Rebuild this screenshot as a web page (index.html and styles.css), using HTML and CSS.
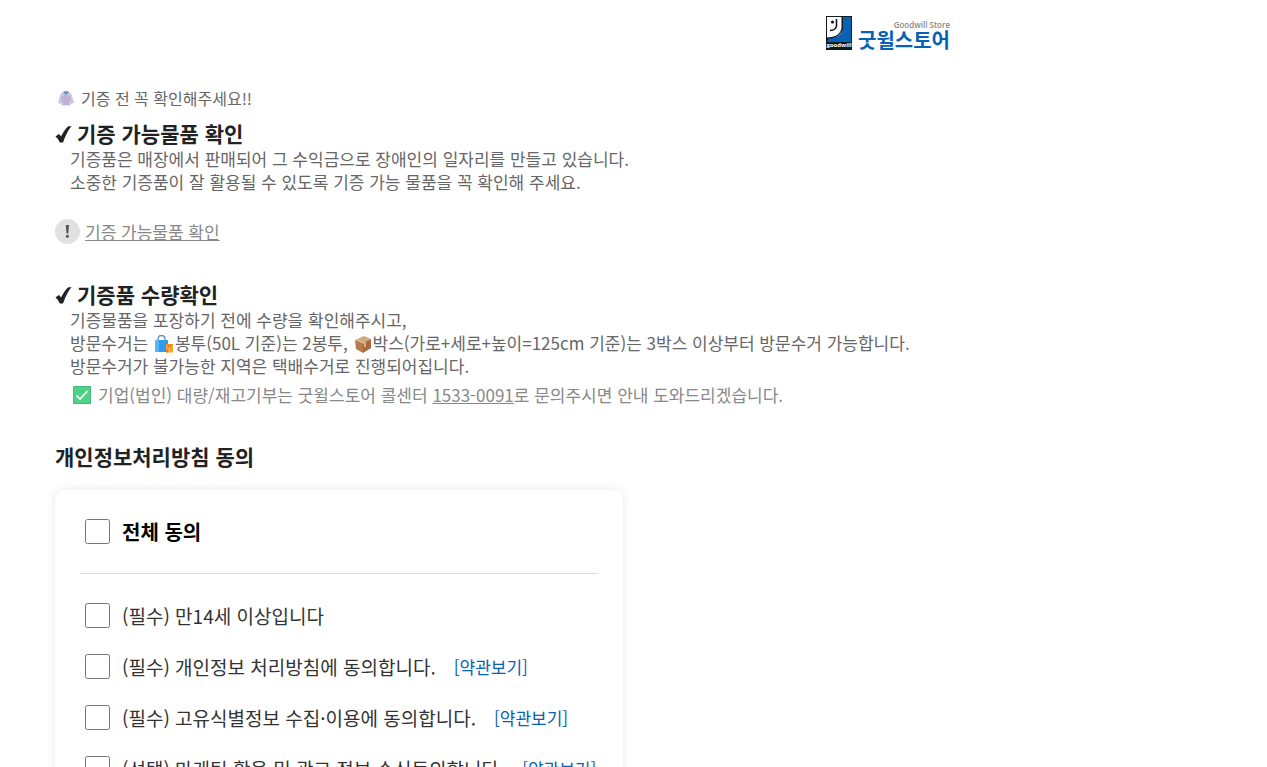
FILE: index.html
```html
<!DOCTYPE html>
<html lang="ko">
<head>
<meta charset="utf-8">
<meta name="viewport" content="width=device-width, initial-scale=1">
<title>굿윌스토어 기증 신청</title>
<link rel="stylesheet" href="styles.css">
</head>
<body>
<div class="page">
  <header class="header">
    <a class="logo" href="#">
      <svg class="logo-mark" viewBox="0 0 26 34" aria-hidden="true">
        <rect width="26" height="34" fill="#101820"/>
        <path d="M12 1h13v25H1z" fill="#0762b3"/>
        <path d="M1 1h15v12Q16 22 1 22z" fill="#fff"/>
        <path d="M1 23q14-1 16-11V1h-1.500v11Q14 21 1 21.500z" fill="#101820"/>
        <circle cx="6.500" cy="6" r="1.600" fill="#111"/>
        <path d="M10.500 3v7q-.5 4-6.500 4.500" fill="none" stroke="#111" stroke-width="1.600"/>
        <text class="logo-tag" x="13" y="31" text-anchor="middle">goodwill</text>
      </svg>
      <span class="logo-text">
        <span class="logo-en">Goodwill Store</span>
        <span class="logo-ko">굿윌스토어</span>
      </span>
    </a>
  </header>

  <main>
    <p class="notice">
      <svg class="coat" viewBox="0 0 16 15" aria-hidden="true">
        <path d="M5 1 2.500 3 0 12l3 1 1-3-.8 4.500h9.600L12 10l1 3 3-1-2.500-9L11 1z" fill="#cfc4e3"/>
        <path d="M5 1l3 3 3-3-1-.8H6z" fill="#5f8fc8"/>
        <path d="M8 4v10M4.500 5 4 11M11.500 5l.5 6M6.200 4v10M9.800 4v10" stroke="#a294c4" stroke-width=".7" fill="none"/>
      </svg>
      기증 전 꼭 확인해주세요!!
    </p>

    <section class="guide">
      <h2 class="title"><svg class="tick" viewBox="0 0 17 18" aria-hidden="true"><path d="M0 11 3.500 8.500q1.500 1 2.300 2.700Q9.500 4 13 .5L17 0Q11.500 7 8 17.500H4.500Q3 13 0 11z"/></svg>기증 가능물품 확인</h2>
      <p class="body">기증품은 매장에서 판매되어 그 수익금으로 장애인의 일자리를 만들고 있습니다.<br>소중한 기증품이 잘 활용될 수 있도록 기증 가능 물품을 꼭 확인해 주세요.</p>
      <a class="check-link" href="#"><svg class="info" viewBox="0 0 25 25" aria-hidden="true"><circle cx="12.500" cy="12.500" r="12.500" fill="#e1e1e1"/><path d="M10.800 6h3.200l-.7 8.500h-1.800z" fill="#555"/><circle cx="12.400" cy="17.300" r="1.500" fill="#555"/></svg><span>기증 가능물품 확인</span></a>
    </section>

    <section class="guide">
      <h2 class="title"><svg class="tick" viewBox="0 0 17 18" aria-hidden="true"><path d="M0 11 3.500 8.500q1.500 1 2.300 2.700Q9.500 4 13 .5L17 0Q11.500 7 8 17.500H4.500Q3 13 0 11z"/></svg>기증품 수량확인</h2>
      <p class="body">기증물품을 포장하기 전에 수량을 확인해주시고,<br>방문수거는 <svg class="emoji" viewBox="0 0 20 18" aria-hidden="true">
          <path d="M4 6V4q0-3.500 3.500-3.500T11 4v2" fill="none" stroke="#5b93bd" stroke-width="1.300"/>
          <path d="M1 5h13v12H1z" fill="#2e9bf0"/><path d="M1 5h4v12H1z" fill="#56b7fa"/>
          <path d="M12 9h7v8.500h-7z" fill="#f9a72b"/><path d="M14 9v2q1.500 2 3 0V9" fill="none" stroke="#d8632d"/><path d="M12 14h2v3.500h-2z" fill="#ef7843"/>
        </svg>봉투(50L 기준)는 2봉투, <svg class="emoji emoji-box" viewBox="0 0 18 18" aria-hidden="true">
          <path d="M1 5 10 1l7 3-7 5z" fill="#d5a878"/><path d="M1 5l8 3.500V18l-7-4z" fill="#b77a4b"/><path d="M9 8.500 17 4v9l-8 5z" fill="#a4693f"/><path d="m4 4 8 3.500v4l-2 1v-4L2.500 5z" fill="#dcb68b"/>
        </svg>박스(가로+세로+높이=125cm 기준)는 3박스 이상부터 방문수거 가능합니다.<br>방문수거가 불가능한 지역은 택배수거로 진행되어집니다.</p>
      <p class="contact"><svg class="green" viewBox="0 0 18 18" aria-hidden="true"><rect width="18" height="18" rx="1" fill="#41bd74"/><rect x="1" y="1" width="16" height="16" fill="#4fd187"/><path d="m3.500 9.500 3.500 3.500 7.500-8" fill="none" stroke="#fff" stroke-width="1.700"/></svg><span>기업(법인) 대량/재고기부는 굿윌스토어 콜센터 <a class="tel" href="tel:1533-0091">1533-0091</a>로 문의주시면 안내 도와드리겠습니다.</span></p>
    </section>

    <form class="consent">
      <h2 class="title">개인정보처리방침 동의</h2>
      <div class="card">
        <div class="row row-all"><input class="box" type="checkbox" id="all"><label for="all">전체 동의</label></div>
        <div class="rows">
          <div class="row"><input class="box" type="checkbox" id="age"><label for="age">(필수) 만14세 이상입니다</label></div>
          <div class="row"><input class="box" type="checkbox" id="privacy"><label for="privacy">(필수) 개인정보 처리방침에 동의합니다.</label><a class="terms" href="#">[약관보기]</a></div>
          <div class="row"><input class="box" type="checkbox" id="ident"><label for="ident">(필수) 고유식별정보 수집·이용에 동의합니다.</label><a class="terms" href="#">[약관보기]</a></div>
          <div class="row"><input class="box" type="checkbox" id="marketing"><label for="marketing">(선택) 마케팅 활용 및 광고 정보 수신동의합니다.</label><a class="terms" href="#">[약관보기]</a></div>
        </div>
      </div>
    </form>
  </main>
</div>
</body>
</html>
```
FILE: styles.css
```css
* { box-sizing: border-box; }

html { scrollbar-width: none; }

body {
  margin: 0;
  background: #fff;
  color: #666;
  font-family: "Noto Sans CJK KR", sans-serif;
  font-size: 17px;
  line-height: 23px;
}

h2, p { margin: 0; }

.page {
  max-width: 1005px;
  padding: 16px 55px 40px;
}

.header {
  display: flex;
  justify-content: flex-end;
}

.logo {
  display: flex;
  align-items: flex-start;
  gap: 6px;
  text-decoration: none;
}

.logo-mark { width: 26px; height: 34px; }

.logo-tag {
  font: 700 6px "Open Sans", sans-serif;
  fill: #fff;
}

.logo-text {
  display: flex;
  flex-direction: column;
  align-items: flex-end;
  padding-top: 3px;
}

.logo-en {
  color: #888;
  font: 600 8px/11px "Open Sans", sans-serif;
}

.logo-ko {
  color: #0762b3;
  font-size: 20px;
  font-weight: 700;
  line-height: 20px;
}

.notice {
  display: flex;
  align-items: center;
  gap: 7px;
  margin-top: 37px;
  padding-left: 3px;
  font-size: 16px;
}

.coat { width: 16px; height: 15px; }

.guide { margin-top: 10px; }

.guide + .guide { margin-top: 37px; }

.title {
  color: #222;
  font-size: 21px;
  font-weight: 700;
  line-height: 27px;
}

.tick {
  width: 17px;
  height: 17px;
  margin-right: 5px;
  vertical-align: -1px;
  fill: #222;
}

.body { padding-left: 15px; }

.check-link {
  display: flex;
  align-items: center;
  gap: 5px;
  width: fit-content;
  margin-top: 26px;
  color: #888;
  text-decoration: none;
}

.check-link span { text-decoration: underline; }

.info { width: 25px; height: 25px; }

.emoji {
  width: 20px;
  height: 18px;
  margin: 0 1px;
  vertical-align: -3px;
}

.emoji-box { width: 18px; }

.contact {
  display: flex;
  align-items: center;
  gap: 7px;
  margin-top: 6px;
  padding-left: 18px;
  color: #888;
}

.green { width: 18px; height: 18px; flex: none; }

.tel { color: inherit; }

.consent { margin-top: 37px; }

.card {
  max-width: 568px;
  margin-top: 20px;
  padding: 28px 25px;
  border-radius: 10px;
  background: #fff;
  box-shadow: 0 0 10px rgba(0, 0, 0, .1);
}

.row {
  display: flex;
  align-items: center;
  height: 27px;
  padding-left: 5px;
  color: #333;
  font-size: 19px;
  white-space: nowrap;
}

.box {
  width: 25px;
  height: 25px;
  margin: 0 12px 0 0;
}

.row-all {
  color: #000;
  font-size: 20px;
  font-weight: 700;
}

.rows {
  display: grid;
  gap: 24px;
  margin-top: 28px;
  padding-top: 28px;
  border-top: 1px solid #ddd;
}

.terms {
  margin-left: 18px;
  color: #0762b3;
  font-size: 17px;
  text-decoration: none;
}
```
